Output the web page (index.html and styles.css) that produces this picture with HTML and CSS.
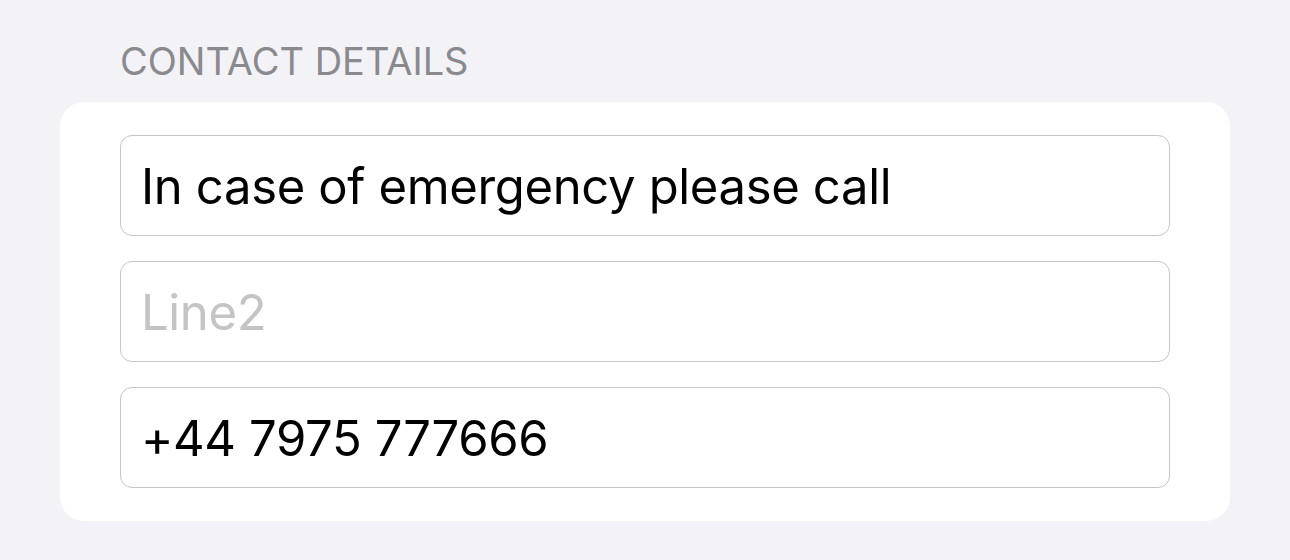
FILE: index.html
```html
<!DOCTYPE html>
<html>
<head>
<meta charset="utf-8">
<link rel="stylesheet" href="styles.css">
</head>
<body>
<div class="page">
  <div class="section-header">CONTACT DETAILS</div>
  <div class="card">
    <div class="field"><span class="value">In case of emergency please call</span></div>
    <div class="field"><span class="placeholder">Line2</span></div>
    <div class="field"><span class="value">+44 7975 777666</span></div>
  </div>
</div>
</body>
</html>
```

FILE: styles.css
```css
html, body {
  margin: 0;
  padding: 0;
  background: #f2f2f7;
}
body {
  width: 1290px;
  height: 560px;
  overflow: hidden;
  font-family: Inter, "Liberation Sans", sans-serif;
}
.page {
  padding: 0 60px;
}
.section-header {
  color: #8a8a8e;
  font-size: 38px;
  line-height: 44px;
  padding: 39px 0 19px 60px;
  letter-spacing: 0;
}
.card {
  background: #ffffff;
  border-radius: 24px;
  padding: 33px 60px;
  display: flex;
  flex-direction: column;
  gap: 25px;
}
.field {
  height: 101px;
  box-sizing: border-box;
  border: 1px solid #c6c6c8;
  border-radius: 12px;
  display: flex;
  align-items: center;
  padding: 2px 20px 0;
  font-size: 49px;
  letter-spacing: -0.35px;
}
.value {
  color: #000000;
}
.placeholder {
  color: #c4c4c6;
}
```
